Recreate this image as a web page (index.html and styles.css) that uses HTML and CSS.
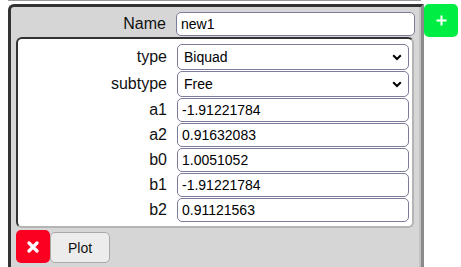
FILE: index.html
```html
<!DOCTYPE html>
<html lang="en">
<head>
  <meta charset="UTF-8">
  <title>Filter editor</title>
  <link rel="stylesheet" href="styles.css">
</head>
<body>
  <div class="prev-edge"></div>
  <div class="layout">
    <div class="filter-panel">
      <div class="field-row">
        <label>Name</label>
        <input type="text" value="new1">
      </div>
      <div class="params">
        <div class="field-row">
          <label>type</label>
          <div class="select-wrap">
            <select><option>Biquad</option></select>
            <svg class="chevron" width="10" height="7" viewBox="0 0 10 7"><path d="M1.2 1.2 L5 5 L8.8 1.2" fill="none" stroke="#000" stroke-width="2"/></svg>
          </div>
        </div>
        <div class="field-row">
          <label>subtype</label>
          <div class="select-wrap">
            <select><option>Free</option></select>
            <svg class="chevron" width="10" height="7" viewBox="0 0 10 7"><path d="M1.2 1.2 L5 5 L8.8 1.2" fill="none" stroke="#000" stroke-width="2"/></svg>
          </div>
        </div>
        <div class="field-row">
          <label>a1</label>
          <input type="text" value="-1.91221784">
        </div>
        <div class="field-row">
          <label>a2</label>
          <input type="text" value="0.91632083">
        </div>
        <div class="field-row">
          <label>b0</label>
          <input type="text" value="1.0051052">
        </div>
        <div class="field-row">
          <label>b1</label>
          <input type="text" value="-1.91221784">
        </div>
        <div class="field-row">
          <label>b2</label>
          <input type="text" value="0.91121563">
        </div>
      </div>
      <div class="actions">
        <button class="btn-delete">
          <svg width="12" height="12" viewBox="0 0 12 12"><path d="M2 2 L10 10 M10 2 L2 10" stroke="#fff" stroke-width="3.2" stroke-linecap="round"/></svg>
        </button>
        <button class="btn-plot">Plot</button>
      </div>
    </div>
    <button class="btn-add">
      <svg width="11" height="11" viewBox="0 0 11 11"><path d="M5.5 0.5 V10.5 M0.5 5.5 H10.5" stroke="#fff" stroke-width="2"/></svg>
    </button>
  </div>
</body>
</html>
```

FILE: styles.css
```css
body {
  margin: 0;
  padding: 0 0 0 8px;
  font-family: 'Liberation Sans', Arial, sans-serif;
  background: #fff;
  color: #111;
}

.prev-edge {
  width: 413px;
  height: 1px;
  background: #999;
  margin-bottom: 3px;
}

.layout {
  display: flex;
  align-items: flex-start;
}

.filter-panel {
  box-sizing: border-box;
  width: 416px;
  height: 270px;
  background: #d6d6d6;
  border-top: 3px solid #333;
  border-left: 3px solid #333;
  border-right: 3px solid #8a8a8a;
  border-top-left-radius: 6px;
  box-shadow: inset -2px 0 0 #c2c2c2;
  padding: 5px 6px 0 5px;
}

.field-row {
  display: grid;
  grid-template-columns: 150px 1fr;
  column-gap: 10px;
  align-items: center;
}

.params .field-row {
  grid-template-columns: 149px 1fr;
}

.field-row label {
  text-align: right;
  font-size: 16px;
  line-height: 18px;
}

input, select {
  box-sizing: border-box;
  width: 100%;
  height: 24px;
  margin: 0;
  padding: 0 4px;
  font-family: 'Liberation Sans', Arial, sans-serif;
  font-size: 14px;
  color: #000;
  background: #fff;
  border: 1px solid #7c7c98;
  border-radius: 5px;
  outline: none;
}

.params {
  margin: 1px 1px 0 0;
  background: #fff;
  border: 2px solid;
  border-color: #333 #b4b4b4 #b4b4b4 #333;
  border-radius: 6px;
  padding: 5px 3px 4px 0;
  display: flex;
  flex-direction: column;
  gap: 1px;
}

.select-wrap {
  position: relative;
}

select {
  height: 26px;
  appearance: none;
  -webkit-appearance: none;
  padding-left: 6px;
}

.chevron {
  position: absolute;
  right: 7px;
  top: 10px;
  pointer-events: none;
}

.actions {
  display: flex;
  align-items: flex-end;
  margin-top: 2px;
}

.btn-delete {
  width: 34px;
  height: 33px;
  border: none;
  border-radius: 5px;
  background: #fb0020;
  display: flex;
  align-items: center;
  justify-content: center;
  padding: 0;
}

.btn-plot {
  width: 60px;
  height: 31px;
  background: #ececec;
  border: 1px solid #a8a8a8;
  border-radius: 5px;
  font-family: 'Liberation Sans', Arial, sans-serif;
  font-size: 14px;
  color: #111;
  padding: 0;
}

.btn-add {
  width: 34px;
  height: 33px;
  border: none;
  border-radius: 5px;
  background: #00ee44;
  display: flex;
  align-items: center;
  justify-content: center;
  padding: 0;
}
```
